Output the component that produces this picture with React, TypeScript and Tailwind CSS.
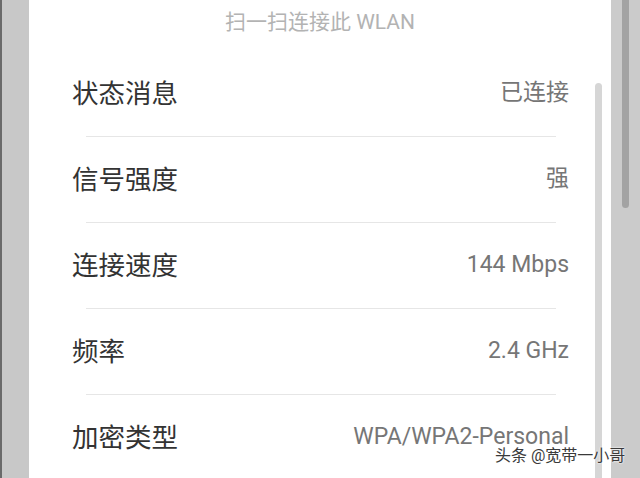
import React from "react";

const rows: [string, string][] = [
  ["状态消息", "已连接"],
  ["信号强度", "强"],
  ["连接速度", "144 Mbps"],
  ["频率", "2.4 GHz"],
  ["加密类型", "WPA/WPA2-Personal"],
];

export default function App() {
  return (
    <div
      className="relative flex h-[478px] w-[640px] overflow-hidden bg-[#c9c9c9]"
      style={{ fontFamily: 'Roboto, "Noto Sans CJK SC", sans-serif' }}
    >
      <div className="h-full w-[29px] border-l-2 border-[#6a6a6a] bg-[#c8c8c8]" />
      <div className="relative h-full w-[582px] bg-white">
        <div className="h-[51px] pt-[11px] text-center text-[21px] leading-[22px] text-[#b3b3b3]">
          扫一扫连接此 WLAN
        </div>
        {rows.map(([k, v], i) => (
          <div key={k}>
            <div className="flex h-[85px] items-center justify-between pl-[43px] pr-[42px]">
              <span className="text-[26.5px] text-[#333333]">{k}</span>
              <span className="text-[23px] text-[#767676]">{v}</span>
            </div>
            {i < rows.length - 1 && <div className="ml-[57px] mr-[55px] h-px bg-[#e6e6e6]" />}
          </div>
        ))}
        <div className="absolute left-[566px] top-[83px] h-[420px] w-[7px] rounded-full bg-[#d6d6d6]" />
      </div>
      <div className="relative h-full w-[29px] bg-[#cbcbcb]">
        <div className="absolute left-[11px] top-[-10px] h-[218px] w-[7px] rounded-full bg-[#a3a3a3]" />
      </div>
      <div className="absolute left-[495px] top-[446px] text-[16px] leading-[20px] text-[#3a3a3a] [text-shadow:0_0_2px_#fff,0_0_2px_#fff]">
        头条 @宽带一小哥
      </div>
    </div>
  );
}
